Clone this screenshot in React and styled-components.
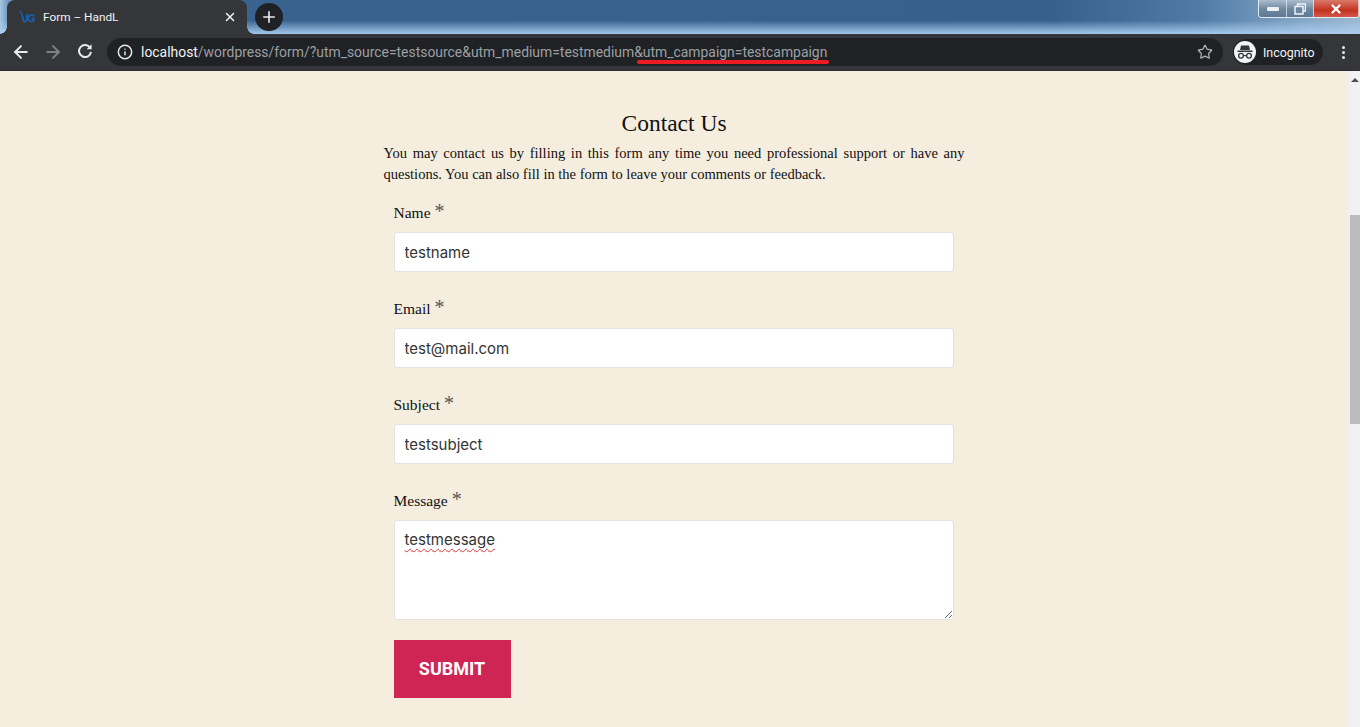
import React from 'react';
import styled, { createGlobalStyle } from 'styled-components';
import { ArrowLeft, ArrowRight, Info, Plus, Star, X } from 'lucide-react';

const GlobalStyle = createGlobalStyle`
  html, body { margin: 0; padding: 0; height: 100%; overflow: hidden; }
  * { box-sizing: border-box; }
`;

const Screen = styled.div`
  width: 1360px;
  height: 727px;
  display: flex;
  flex-direction: column;
  overflow: hidden;
  background: #f5eedf;
`;

const TabStrip = styled.div`
  height: 34px;
  display: flex;
  align-items: flex-start;
  padding-left: 7px;
  background:
    linear-gradient(180deg, rgba(170, 205, 240, 0) 60%, rgba(170, 205, 240, 0.95) 100%),
    linear-gradient(90deg, #a8c6e2 0, #6f97bf 8px, #38638f 250px, #36618e 1050px, #4f7ba6 1200px, #84a6c6 1300px, #9db9d2 1360px);
`;

const Tab = styled.div`
  position: relative;
  width: 240px;
  height: 34px;
  display: flex;
  align-items: center;
  padding: 0 10px 0 12px;
  background: #35363a;
  border-radius: 8px 8px 0 0;
  color: #f1f3f4;
  font: 11.8px "Roboto", sans-serif;

  &::before, &::after {
    content: '';
    position: absolute;
    bottom: 0;
    width: 7px;
    height: 7px;
  }
  &::before {
    left: -7px;
    background: radial-gradient(circle at 0 0, transparent 6.5px, #35363a 7px);
  }
  &::after {
    right: -7px;
    background: radial-gradient(circle at 100% 0, transparent 6.5px, #35363a 7px);
  }
`;

const TabTitle = styled.span`
  margin-left: 8px;
  flex: 1;
`;

const NewTab = styled.div`
  width: 28px;
  height: 28px;
  margin: 3px 0 0 8px;
  display: flex;
  align-items: center;
  justify-content: center;
  border-radius: 50%;
  background: #202124;
  color: #e8eaed;
`;

const WindowControls = styled.div`
  margin-left: auto;
  width: 102px;
  height: 18px;
  display: flex;
  border: 1px solid #e4ebf2;
  border-top: none;
  border-radius: 0 0 4px 4px;
  overflow: hidden;
`;

const WindowButton = styled.div`
  width: ${p => p.$width}px;
  display: flex;
  align-items: center;
  justify-content: center;
  border-right: 1px solid rgba(230, 238, 245, 0.7);
  background: ${p => p.$close
    ? 'linear-gradient(180deg, #d9796a 0, #c5321f 60%, #d2584a 100%)'
    : 'linear-gradient(180deg, #a9bdd0 0, #6d879f 55%, #5d7a95 100%)'};
  color: #fff;
`;

const Toolbar = styled.div`
  height: 37px;
  display: flex;
  align-items: center;
  background: #35363a;
  border-bottom: 1px solid #2c2d30;
`;

const NavButton = styled.div`
  width: 32px;
  display: flex;
  justify-content: center;
  color: ${p => (p.$dim ? '#7e8083' : '#e8eaed')};
`;

const NavGroup = styled.div`
  display: flex;
  padding-left: 5px;
  width: 107px;
`;

const AddressBar = styled.div`
  position: relative;
  width: 1116px;
  height: 28px;
  display: flex;
  align-items: center;
  padding: 0 10px;
  border-radius: 14px;
  background: #202124;
  color: #e8eaed;
`;

const Url = styled.div`
  margin-left: 8px;
  flex: 1;
  font: 13.92px "Roboto", sans-serif;
  color: #9aa0a6;
  white-space: nowrap;
`;

const Host = styled.span`
  color: #f1f3f4;
`;

const FavStar = styled(Star)`
  color: #b4b6b9;
`;

const RedMark = styled.div`
  position: absolute;
  left: 530px;
  top: 22px;
  width: 192px;
  height: 4px;
  border-radius: 2px;
  background: #ed1c24;
`;

const IncognitoPill = styled.div`
  width: 90px;
  height: 26px;
  margin-left: 10px;
  display: flex;
  align-items: center;
  gap: 7px;
  padding-left: 1px;
  border-radius: 13px;
  background: #202124;
  color: #f1f3f4;
  font: 12.4px "Roboto", sans-serif;
`;

const IncognitoBadge = styled.div`
  width: 22px;
  height: 22px;
  display: flex;
  align-items: center;
  justify-content: center;
  border-radius: 50%;
  background: #f1f3f4;
  color: #35363a;
`;

const Dots = styled.div`
  margin-left: 19px;
  display: flex;
  flex-direction: column;
  gap: 2px;
`;

const Dot = styled.i`
  width: 3px;
  height: 3px;
  border-radius: 50%;
  background: #e8eaed;
`;

const PageArea = styled.div`
  flex: 1;
  display: flex;
  min-height: 0;
`;

const Page = styled.main`
  flex: 1;
  padding-top: 37px;
  display: flex;
  justify-content: center;
  background: #f5eedf;
`;

const Article = styled.article`
  width: 581px;
  font-family: "Liberation Serif", serif;
  color: #111;
`;

const Heading = styled.h1`
  margin: 0;
  height: 35px;
  font-size: 23.5px;
  line-height: 30px;
  font-weight: 400;
  text-align: center;
`;

const Intro = styled.p`
  margin: 0 0 15px;
  font-size: 14.5px;
  line-height: 21px;
  text-align: justify;
`;

const Form = styled.form`
  width: 560px;
  margin-left: 10px;
  display: flex;
  flex-direction: column;
`;

const Field = styled.div`
  display: flex;
  flex-direction: column;
  margin-bottom: 24px;

  &:last-of-type {
    margin-bottom: 20px;
  }
`;

const Label = styled.label`
  height: 32px;
  font-size: 15.5px;
  line-height: 22px;
`;

const Asterisk = styled.span`
  margin-left: 4px;
  font-size: 20px;
  color: #555;
`;

const Input = styled.input`
  width: 560px;
  height: 40px;
  padding: 0 10px;
  border: 1px solid #e2e2e2;
  border-radius: 3px;
  background: #fff;
  color: #333;
  font: 15px "Inter", sans-serif;
  outline: none;
`;

const TextArea = styled.textarea`
  display: block;
  width: 560px;
  height: 100px;
  padding: 9px 10px;
  border: 1px solid #e2e2e2;
  border-radius: 3px;
  background: #fff;
  color: #333;
  font: 15px/20px "Inter", sans-serif;
  outline: none;
  resize: vertical;
  text-decoration: underline wavy #e0343c 1px;
  text-underline-offset: 3px;
`;

const Submit = styled.button`
  width: 117px;
  height: 58px;
  padding: 0 0 2px;
  border: none;
  background: #cf2554;
  color: #fff;
  font: 700 18px "Roboto", sans-serif;
  text-transform: uppercase;
`;

const Scrollbar = styled.div`
  width: 12px;
  display: flex;
  flex-direction: column;
  align-items: flex-end;
  background: #f1f1f1;
`;

const ScrollArrow = styled.div`
  margin: 7px 1px 0 0;
  width: 0;
  height: 0;
  border: 4px solid transparent;
  border-top: none;
  border-bottom: 4px solid #505050;
`;

const ScrollThumb = styled.div`
  width: 10px;
  height: 209px;
  margin-top: 133px;
  background: #bcbcbc;
`;

const Favicon = () => (
  <svg width="16" height="14" viewBox="0 0 16 14" fill="none" stroke="#1565b8" strokeWidth="1.5">
    <circle cx="1.5" cy="2" r="1" fill="#1565b8" stroke="none" />
    <path d="M2.5 3 L4.5 11 Q6 13 7.5 10 L8 4" />
    <path d="M15 6.5 A3.2 3.2 0 1 0 15 10 V8.5 H12.5" />
  </svg>
);

const Reload = () => (
  <svg width="16" height="16" viewBox="0 -1 16 16" fill="none" stroke="currentColor" strokeWidth="2">
    <path d="M13.2 5 A6 6 0 1 0 14 8.8" />
    <path d="M14.6 1.2 V6.2 H9.6 Z" fill="currentColor" stroke="none" />
  </svg>
);

const SpyIcon = () => (
  <svg width="18" height="16" viewBox="0 0 18 16" fill="currentColor">
    <path d="M5 1.5 H13 L14 6 H4 Z" />
    <rect x="1.5" y="6.5" width="15" height="1.5" />
    <circle cx="5" cy="11.8" r="2.4" fill="none" stroke="currentColor" strokeWidth="1.3" />
    <circle cx="13" cy="11.8" r="2.4" fill="none" stroke="currentColor" strokeWidth="1.3" />
    <rect x="7.2" y="11" width="3.6" height="1.2" />
  </svg>
);

const fields = [
  { label: 'Name', value: 'testname' },
  { label: 'Email', value: 'test@mail.com' },
  { label: 'Subject', value: 'testsubject' },
];

export default function App() {
  return (
    <Screen>
      <GlobalStyle />
      <TabStrip>
        <Tab>
          <Favicon />
          <TabTitle>Form – HandL</TabTitle>
          <X size={14} strokeWidth={2.5} />
        </Tab>
        <NewTab><Plus size={18} strokeWidth={2.2} /></NewTab>
        <WindowControls>
          <WindowButton $width={29}>
            <svg width="12" height="4"><rect width="12" height="4" rx="1" fill="#eef2f6" /></svg>
          </WindowButton>
          <WindowButton $width={27}>
            <svg width="12" height="12" fill="none" stroke="#eef2f6" strokeWidth="1.5">
              <rect x="3.5" y="1" width="8" height="7" />
              <rect x="1" y="3.5" width="8" height="7.5" fill="#6d879f" />
            </svg>
          </WindowButton>
          <WindowButton $width={46} $close><X size={14} strokeWidth={4} /></WindowButton>
        </WindowControls>
      </TabStrip>
      <Toolbar>
        <NavGroup>
          <NavButton><ArrowLeft size={20} strokeWidth={2.4} /></NavButton>
          <NavButton $dim><ArrowRight size={20} strokeWidth={2.4} /></NavButton>
          <NavButton><Reload /></NavButton>
        </NavGroup>
        <AddressBar>
          <Info size={16} strokeWidth={2.2} />
          <Url><Host>localhost</Host>/wordpress/form/?utm_source=testsource&utm_medium=testmedium&utm_campaign=testcampaign</Url>
          <FavStar size={16} strokeWidth={1.8} />
          <RedMark />
        </AddressBar>
        <IncognitoPill>
          <IncognitoBadge><SpyIcon /></IncognitoBadge>
          Incognito
        </IncognitoPill>
        <Dots><Dot /><Dot /><Dot /></Dots>
      </Toolbar>
      <PageArea>
        <Page>
          <Article>
            <Heading>Contact Us</Heading>
            <Intro>
              You may contact us by filling in this form any time you need professional support or have any questions. You can also fill in the form to leave your comments or feedback.
            </Intro>
            <Form>
              {fields.map(f => (
                <Field key={f.label}>
                  <Label>{f.label}<Asterisk>*</Asterisk></Label>
                  <Input defaultValue={f.value} spellCheck={false} />
                </Field>
              ))}
              <Field>
                <Label>Message<Asterisk>*</Asterisk></Label>
                <TextArea defaultValue="testmessage" spellCheck={false} />
              </Field>
              <Submit type="button">Submit</Submit>
            </Form>
          </Article>
        </Page>
        <Scrollbar>
          <ScrollArrow />
          <ScrollThumb />
        </Scrollbar>
      </PageArea>
    </Screen>
  );
}
